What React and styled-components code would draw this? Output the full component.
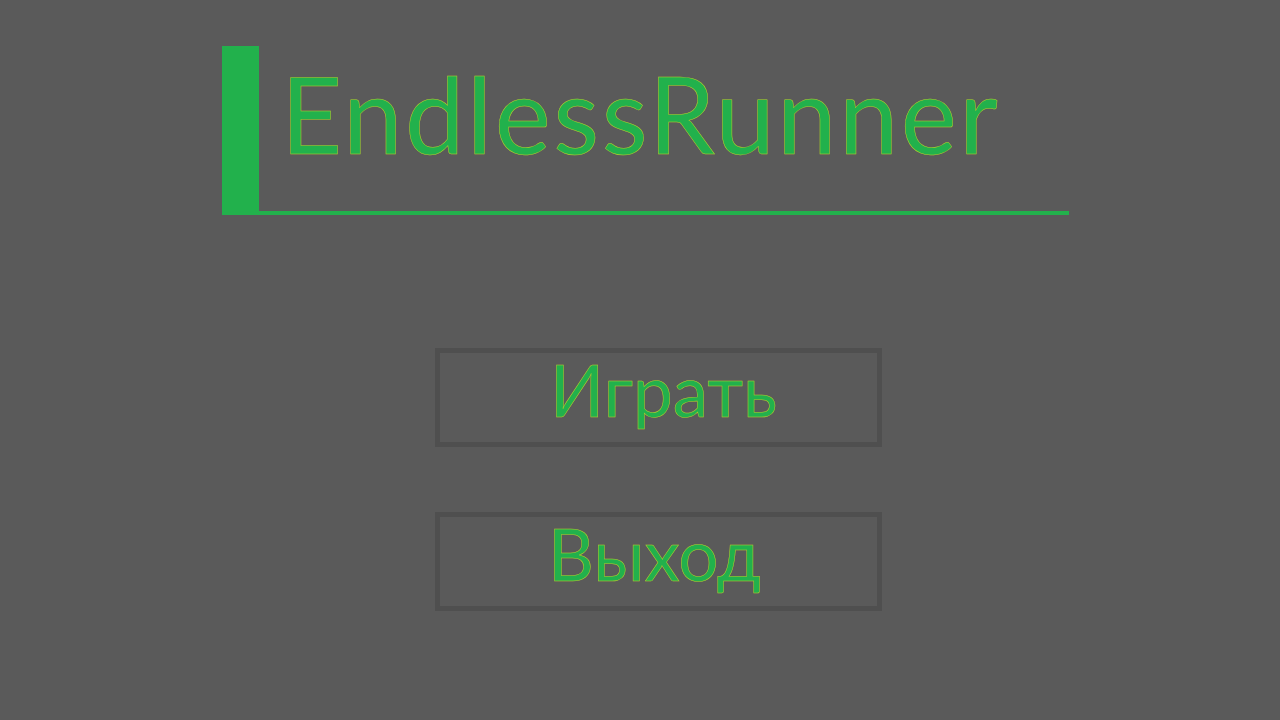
import React from "react";
import styled, { createGlobalStyle } from "styled-components";

const Global = createGlobalStyle`
  html, body { margin: 0; padding: 0; background: #5a5a5a; }
  body { font-family: "Lato", "Open Sans", sans-serif; }
`;

const Page = styled.div`
  width: 1280px;
  height: 720px;
  background: #5a5a5a;
  display: flex;
  flex-direction: column;
  padding-top: 46px;
  box-sizing: border-box;
  overflow: hidden;
`;

const Header = styled.header`
  margin-left: 222px;
  width: 847px;
  height: 169px;
  display: flex;
`;

const AccentBar = styled.div`
  width: 37px;
  background: #22b14c;
`;

const TitleArea = styled.div`
  flex: 1;
  border-bottom: 4px solid #22b14c;
  padding-left: 22px;
  display: flex;
  align-items: flex-start;
`;

const Title = styled.h1`
  margin: 0;
  font-family: "Lato", "Open Sans", sans-serif;
  font-weight: 400;
  font-size: 106px;
  letter-spacing: 2.6px;
  line-height: 1;
  color: #22b14c;
  padding-top: 14px;
  -webkit-text-stroke: 0.5px #b4cf2c;
`;

const Menu = styled.nav`
  margin-left: 435px;
  margin-top: 133px;
  display: flex;
  flex-direction: column;
  gap: 65px;
`;

const MenuButton = styled.button`
  width: 447px;
  height: 99px;
  box-sizing: border-box;
  border: 5px solid #4f4f4f;
  background: transparent;
  color: #22b14c;
  font-family: "Lato", "Open Sans", sans-serif;
  font-size: 71px;
  line-height: 1;
  padding: 0 ${(p) => Math.max(0, -p.$shift)}px 16px ${(p) => Math.max(0, p.$shift)}px;
  display: flex;
  align-items: center;
  justify-content: center;
  cursor: pointer;
  -webkit-text-stroke: 0.5px #b4cf2c;
`;

export default function App() {
  return (
    <>
      <Global />
      <Page>
        <Header>
          <AccentBar />
          <TitleArea>
            <Title>EndlessRunner</Title>
          </TitleArea>
        </Header>
        <Menu>
          <MenuButton $shift={10}>Играть</MenuButton>
          <MenuButton $shift={-8}>Выход</MenuButton>
        </Menu>
      </Page>
    </>
  );
}
